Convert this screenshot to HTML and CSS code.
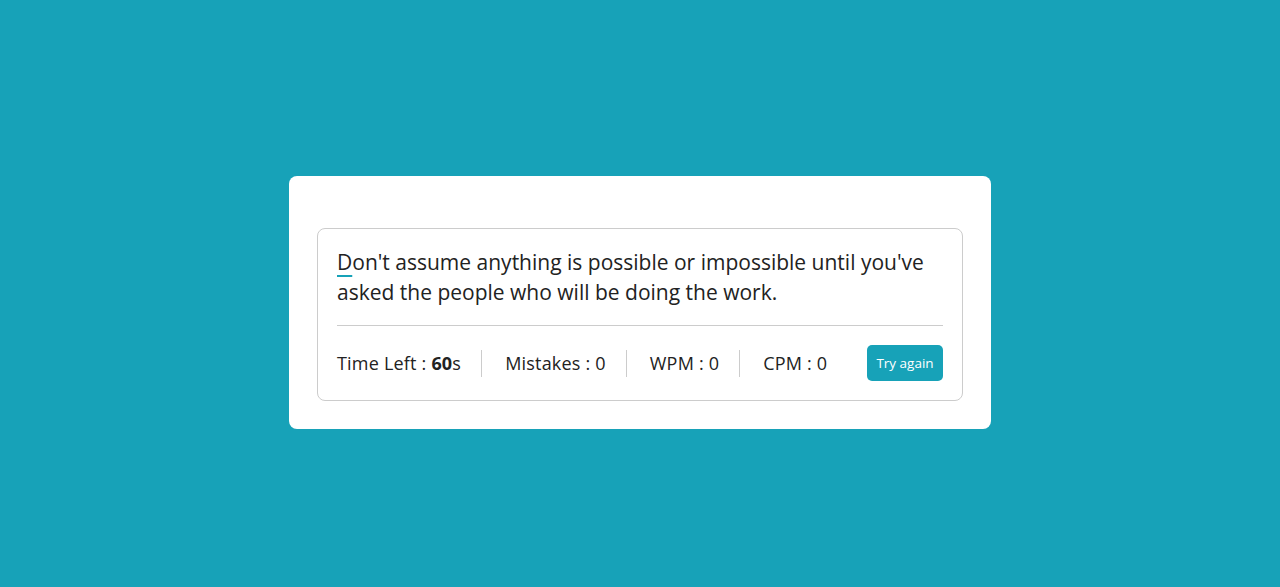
FILE: index.html
```html
<!DOCTYPE html>
<html lang="en">
<head>
<meta charset="utf-8">
<title>Typing Test</title>
<link rel="stylesheet" href="styles.css">
</head>
<body>
<div class="wrapper">
  <div class="content-box">
    <div class="typing-text">
      <p><span class="char active">D</span>on't assume anything is possible or impossible until you've asked the people who will be doing the work.</p>
    </div>
    <div class="content">
      <ul class="result-details">
        <li class="time">Time Left : <b>60</b>s</li>
        <li class="mistake">Mistakes : 0</li>
        <li class="wpm">WPM : 0</li>
        <li class="cpm">CPM : 0</li>
      </ul>
      <button class="btn">Try again</button>
    </div>
  </div>
</div>
</body>
</html>
```

FILE: styles.css
```css
* {
  margin: 0;
  padding: 0;
  box-sizing: border-box;
}
body {
  min-height: 100vh;
  display: flex;
  align-items: center;
  justify-content: center;
  padding-top: 18px;
  background: #17a2b8;
  font-family: "Open Sans", "Liberation Sans", sans-serif;
}
.wrapper {
  width: 702px;
  padding: 52px 28px 28px;
  background: #fff;
  border-radius: 8px;
}
.content-box {
  border: 1px solid #ccc;
  border-radius: 8px;
  padding: 18px 19px 19px;
}
.typing-text p {
  font-size: 21px;
  line-height: 30px;
  color: #222;
}
.char.active {
  text-decoration: underline;
  text-decoration-color: #17a2b8;
  text-decoration-thickness: 2px;
  text-underline-offset: 5px;
}
.content {
  margin-top: 18px;
  border-top: 1px solid #ccc;
  padding-top: 19px;
  display: flex;
  align-items: center;
  justify-content: space-between;
}
.result-details {
  list-style: none;
  display: flex;
  align-items: center;
}
.result-details li {
  height: 27px;
  display: flex;
  align-items: center;
  font-size: 18px;
  letter-spacing: 0.2px;
  color: #222;
  padding: 0 20px 0 23px;
  border-left: 1px solid #ccc;
  white-space: pre;
}
.result-details li:first-child {
  padding-left: 0;
  border-left: none;
}
.result-details li:last-child {
  padding-right: 0;
}
.result-details b {
  font-weight: 700;
}
.btn {
  width: 76px;
  height: 36px;
  border: none;
  border-radius: 5px;
  background: #17a2b8;
  color: #fff;
  font-family: inherit;
  font-size: 13.5px;
  font-weight: 500;
  cursor: pointer;
}
```
